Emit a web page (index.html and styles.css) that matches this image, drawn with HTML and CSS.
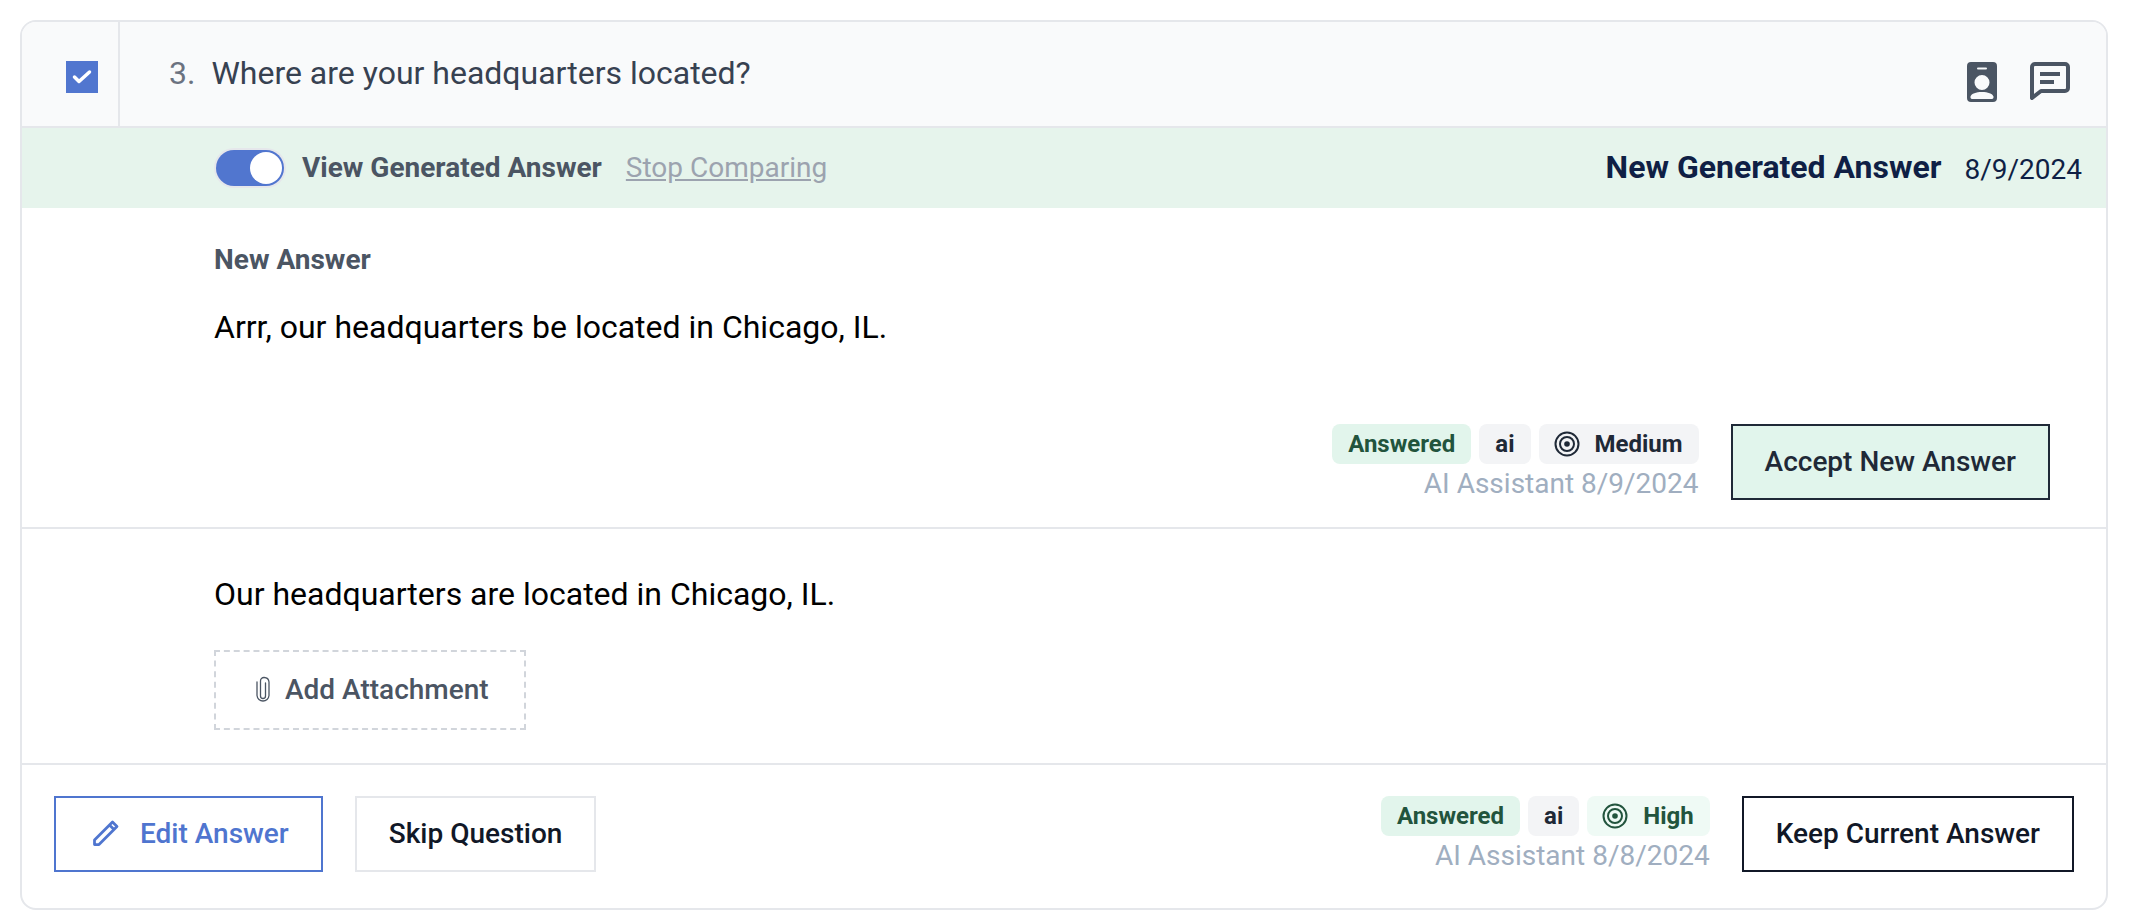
FILE: index.html
```html
<!DOCTYPE html>
<html lang="en">
<head>
<meta charset="utf-8">
<title>Question 3</title>
<link rel="stylesheet" href="styles.css">
</head>
<body>
<main class="card">
  <header class="head">
    <div class="check-cell">
      <span class="checkbox">
        <svg viewBox="0 0 32 32" width="32" height="32"><path d="M8.500 16l4.500 4.500L23.500 11" fill="none" stroke="#fff" stroke-width="3.500" stroke-linecap="round" stroke-linejoin="round"/></svg>
      </span>
    </div>
    <div class="question">
      <span class="num">3.</span>
      <span class="q-text">Where are your headquarters located?</span>
    </div>
    <div class="head-icons">
      <svg class="id-icon" viewBox="0 0 30 40" width="30" height="40"><path fill="#4b5563" fill-rule="evenodd" d="M4 0h22a4 4 0 0 1 4 4v32a4 4 0 0 1-4 4H4a4 4 0 0 1-4-4V4a4 4 0 0 1 4-4zM11 5.500a1 1 0 0 0 0 2h8a1 1 0 0 0 0-2zM15 13a7.500 7.500 0 1 0 0 15 7.500 7.500 0 0 0 0-15zM15 30c-6 0-10.500 1.500-11.500 4.500-.3 1 .4 2.500 1.500 2.500h20c1.100 0 1.800-1.500 1.500-2.500-1-3-5.500-4.500-11.500-4.500z"/></svg>
      <svg class="chat-icon" viewBox="0 0 40 40" width="40" height="40"><path fill="none" stroke="#4b5563" stroke-width="4" stroke-linejoin="round" d="M2 36V5a3 3 0 0 1 3-3h30a3 3 0 0 1 3 3v21a3 3 0 0 1-3 3H11z"/><path fill="#4b5563" d="M10 10h20v4H10zM10 18h14v4H10z"/></svg>
    </div>
  </header>

  <div class="band">
    <span class="toggle"><span class="knob"></span></span>
    <strong class="view-label">View Generated Answer</strong>
    <a class="stop" href="#">Stop Comparing</a>
    <strong class="gen-title">New Generated Answer</strong>
    <span class="gen-date">8/9/2024</span>
  </div>

  <section class="new-answer">
    <h2 class="answer-label">New Answer</h2>
    <p class="answer-text">Arrr, our headquarters be located in Chicago, IL.</p>
    <div class="action-row">
      <div class="meta">
        <div class="badges">
          <span class="badge badge-green">Answered</span>
          <span class="badge badge-gray">ai</span>
          <span class="badge badge-gray badge-icon">
            <svg class="target" viewBox="0 0 26 26" width="26" height="26"><circle cx="13" cy="13" r="11.500" fill="none" stroke="currentColor" stroke-width="2"/><circle cx="13" cy="13" r="7" fill="none" stroke="currentColor" stroke-width="2"/><circle cx="13" cy="13" r="2.800" fill="currentColor"/></svg>
            Medium
          </span>
        </div>
        <div class="byline">AI Assistant 8/9/2024</div>
      </div>
      <button class="btn btn-accept">Accept New Answer</button>
    </div>
  </section>

  <section class="current">
    <p class="answer-text">Our headquarters are located in Chicago, IL.</p>
    <button class="attach">
      <svg viewBox="0 0 14 26" width="14" height="26"><path fill="none" stroke="#4b5563" stroke-width="1.300" stroke-linecap="round" d="M9.500 7v13a2.500 2.500 0 0 1-5 0V5a3.500 3.500 0 0 1 3.500-3.500h.2A5 5 0 0 1 13 6v13.500a6 6 0 0 1-6 5.500 6 6 0 0 1-6-5.500V6"/></svg>
      Add Attachment
    </button>
  </section>

  <footer class="foot">
    <button class="btn btn-edit">
      <svg viewBox="0 0 26 26" width="26" height="26"><path fill="none" stroke="#4f75cf" stroke-width="2.750" stroke-linejoin="round" d="M1.500 20 19.500 2 24 6.500 6 24.500H1.500zM16.500 5l4.500 4.500"/></svg>
      Edit Answer
    </button>
    <button class="btn btn-skip">Skip Question</button>
    <div class="meta meta-foot">
      <div class="badges">
        <span class="badge badge-green">Answered</span>
        <span class="badge badge-gray">ai</span>
        <span class="badge badge-mint badge-icon">
          <svg class="target" viewBox="0 0 26 26" width="26" height="26"><circle cx="13" cy="13" r="11.500" fill="none" stroke="currentColor" stroke-width="2"/><circle cx="13" cy="13" r="7" fill="none" stroke="currentColor" stroke-width="2"/><circle cx="13" cy="13" r="2.800" fill="currentColor"/></svg>
          High
        </span>
      </div>
      <div class="byline">AI Assistant 8/8/2024</div>
    </div>
    <button class="btn btn-keep">Keep Current Answer</button>
  </footer>
</main>
</body>
</html>
```
FILE: styles.css
```css
* { box-sizing: border-box; }
html, body { margin: 0; background: #fff; }
body {
  padding: 20px 22px 14px 20px;
  font-family: Roboto, "Liberation Sans", sans-serif;
  color: #000;
}
.card {
  border: 2px solid #e5e7eb;
  border-radius: 16px;
  overflow: hidden;
  background: #fff;
}
.head {
  display: flex;
  height: 106px;
  background: #f9fafb;
  border-bottom: 2px solid #e5e7eb;
}
.check-cell {
  width: 98px;
  flex: none;
  border-right: 2px solid #e5e7eb;
  padding: 39px 0 0 44px;
}
.checkbox {
  display: block;
  width: 32px;
  height: 32px;
  background: #5176cf;
}
.checkbox svg { display: block; }
.question {
  flex: 1;
  display: flex;
  gap: 16px;
  padding: 31px 0 0 49px;
  font-size: 32px;
  line-height: 40px;
}
.num { color: #6b7280; }
.q-text { color: #374151; }
.head-icons {
  display: flex;
  gap: 33px;
  padding: 40px 36px 0 0;
}
.head-icons svg { display: block; }
.band {
  display: flex;
  align-items: center;
  height: 80px;
  padding: 0 24px 0 194px;
  background: #e6f4ec;
}
.toggle {
  width: 68px;
  height: 36px;
  flex: none;
  border-radius: 18px;
  background: #5176cf;
  padding: 2px;
  display: flex;
  justify-content: flex-end;
  box-shadow: 0 0 0 2px #e5e7eb;
}
.knob {
  width: 32px;
  height: 32px;
  border-radius: 50%;
  background: #fff;
}
.view-label {
  margin: 0 0 2px 18px;
  font-size: 28px;
  font-weight: 700;
  color: #4b5563;
}
.stop {
  margin: 0 0 2px 24px;
  font-size: 28px;
  color: #9ca3af;
  text-decoration: underline;
}
.gen-title {
  margin: 0 0 2px auto;
  font-size: 32px;
  font-weight: 700;
  color: #0f1f45;
}
.gen-date {
  margin: 2px 0 0 23px;
  font-size: 28px;
  color: #0f1f45;
}
.new-answer {
  padding: 25px 56px 24px 192px;
  border-bottom: 2px solid #e5e7eb;
}
.answer-label {
  margin: 0;
  font-size: 28px;
  line-height: 54px;
  font-weight: 700;
  color: #4b5563;
}
.answer-text {
  margin: 0;
  font-size: 32px;
  line-height: 40px;
  color: #000;
}
.new-answer .answer-text { margin-top: 20px; }
.action-row {
  display: flex;
  justify-content: flex-end;
  gap: 32px;
  margin-top: 77px;
}
.meta {
  display: flex;
  flex-direction: column;
  align-items: flex-end;
}
.badges { display: flex; gap: 8px; }
.badge {
  display: flex;
  align-items: center;
  gap: 16px;
  height: 40px;
  padding: 0 16px;
  border-radius: 8px;
  font-size: 24px;
  font-weight: 700;
}
.badge-icon { gap: 15px; padding-left: 15px; }
.badge-green { background: #e2f5ec; color: #22543d; }
.badge-gray { background: #f3f4f6; color: #1f2937; }
.badge-mint { background: #effaf5; color: #22543d; }
.target { display: block; flex: none; }
.byline {
  font-size: 28px;
  line-height: 38px;
  padding-top: 1px;
  color: #a0aec0;
}
.btn {
  display: inline-flex;
  align-items: center;
  justify-content: center;
  height: 76px;
  padding: 0 32px 2px;
  border: 2px solid #e5e7eb;
  border-radius: 0;
  background: #fff;
  font-family: inherit;
  font-size: 28px;
  font-weight: 500;
  color: #111827;
}
.btn-accept { background: #e1f5ec; border-color: #1f2937; color: #1f2937; }
.current {
  height: 236px;
  padding: 45px 0 0 192px;
  border-bottom: 2px solid #e5e7eb;
}
.attach {
  display: flex;
  align-items: center;
  gap: 15px;
  width: 312px;
  height: 80px;
  margin-top: 36px;
  padding: 0 0 2px 40px;
  border: 2px dashed #d1d5db;
  background: #fff;
  font-family: inherit;
  font-size: 28px;
  font-weight: 500;
  color: #4b5563;
}
.foot {
  display: flex;
  align-items: flex-start;
  gap: 32px;
  padding: 31px 32px 33px;
}
.btn-edit { border-color: #4f75cf; color: #4f75cf; gap: 21px; padding: 0 32px 2px 37px; }
.meta-foot { margin-left: auto; }
.btn-keep { border-color: #111827; }
```
